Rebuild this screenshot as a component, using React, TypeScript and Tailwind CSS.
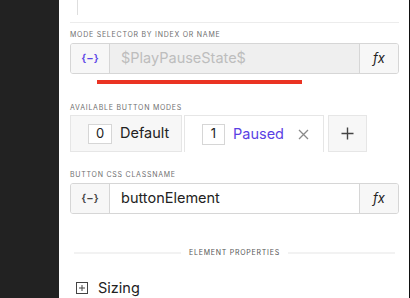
import React from "react";

const font = { fontFamily: "Inter, 'Noto Sans', sans-serif" };

function Label({ children, className = "" }: { children: React.ReactNode; className?: string }) {
  return (
    <div className={`text-[7px] leading-[9px] tracking-[0.75px] text-[#6f6f6f] uppercase ${className}`}>
      {children}
    </div>
  );
}

function BraceIcon({ color }: { color: string }) {
  return (
    <span className="text-[11px] leading-none font-semibold" style={{ color }}>
      {"{−}"}
    </span>
  );
}

function InputRow({
  iconColor,
  text,
  textClass,
  midBg,
}: {
  iconColor: string;
  text: string;
  textClass: string;
  midBg: string;
}) {
  return (
    <div className="flex h-[31px] border border-[#d6d6d6] rounded-[3px] overflow-hidden">
      <div className="w-[39px] flex items-center justify-center bg-[#f7f7f7] border-r border-[#d6d6d6]">
        <BraceIcon color={iconColor} />
      </div>
      <div className={`flex-1 flex items-center pl-[11px] ${midBg}`}>
        <span className={`text-[14.5px] leading-none ${textClass}`}>{text}</span>
      </div>
      <div className="w-[39px] flex items-center justify-center bg-[#f7f7f7] border-l border-[#d6d6d6]">
        <span className="text-[13px] italic text-[#222] leading-none">fx</span>
      </div>
    </div>
  );
}

export default function App() {
  return (
    <div className="flex w-[410px] h-[298px] overflow-hidden bg-white" style={font}>
      <div className="w-[59px] h-full bg-[#222222]" />
      <div className="flex-1 flex flex-col pl-[11px] pr-[10px] overflow-hidden">
        <div className="h-[15px] ml-[7px] w-px bg-[#dedede]" />
        <div className="mt-[7px] h-px bg-[#ececec]" />
        <Label className="mt-[7px]">Mode selector by index or name</Label>
        <div className="mt-[4px]">
          <InputRow
            iconColor="#5b46e6"
            text="$PlayPauseState$"
            textClass="text-[#bdbdbd]"
            midBg="bg-[#efefef]"
          />
        </div>
        <div className="mt-[6px] ml-[27px] w-[205px] h-[4px] bg-[#ea3323]" />
        <Label className="mt-[19px]">Available button modes</Label>
        <div className="mt-[3px] flex h-[37px]">
          <div className="w-[112px] flex items-center pl-[17px] bg-[#f7f7f7] border border-[#e6e6e6]">
            <div className="w-[24px] h-[20px] flex items-center justify-center bg-white border border-[#d6d6d6] text-[13px] text-[#222]">
              0
            </div>
            <span className="ml-[8px] text-[14.5px] text-[#222] leading-none">Default</span>
          </div>
          <div className="ml-[2px] w-[140px] flex items-center pl-[17px] bg-white border border-b-0 border-[#e6e6e6]">
            <div className="w-[23px] h-[21px] flex items-center justify-center bg-white border border-[#d6d6d6] text-[13px] text-[#222]">
              1
            </div>
            <span className="ml-[8px] text-[14.5px] text-[#5a3fe4] leading-none">Paused</span>
            <svg className="ml-[14px]" width="11" height="11" viewBox="0 0 11 11">
              <path d="M1 1L10 10M10 1L1 10" stroke="#8a8a8a" strokeWidth="1.3" />
            </svg>
          </div>
          <div className="ml-[4px] w-[39px] flex items-center justify-center bg-[#f7f7f7] border border-[#e6e6e6]">
            <svg width="13" height="13" viewBox="0 0 13 13">
              <path d="M6.5 0.5V12.5M0.5 6.5H12.5" stroke="#444" strokeWidth="1.4" />
            </svg>
          </div>
        </div>
        <Label className="mt-[18px]">Button CSS classname</Label>
        <div className="mt-[4px]">
          <InputRow iconColor="#444444" text="buttonElement" textClass="text-[#222]" midBg="bg-white" />
        </div>
        <div className="mt-[34px] flex items-center h-[9px] px-[4px] gap-[8px]">
          <div className="flex-1 h-[2px] bg-[#f2f2f2]" />
          <span className="text-[7px] leading-[9px] tracking-[0.75px] text-[#555] uppercase">
            Element properties
          </span>
          <div className="flex-1 h-[2px] bg-[#f2f2f2]" />
        </div>
        <div className="mt-[21px] flex items-center h-[19px] ml-[6px]">
          <svg width="12" height="12" viewBox="0 0 12 12">
            <rect x="0.5" y="0.5" width="11" height="11" fill="white" stroke="#444" />
            <path d="M6 3V9M3 6H9" stroke="#444" strokeWidth="1" />
          </svg>
          <span className="ml-[10px] text-[14.5px] leading-[19px] text-[#222]">Sizing</span>
        </div>
      </div>
      <div className="w-[1px] h-full bg-[#111]" />
    </div>
  );
}
